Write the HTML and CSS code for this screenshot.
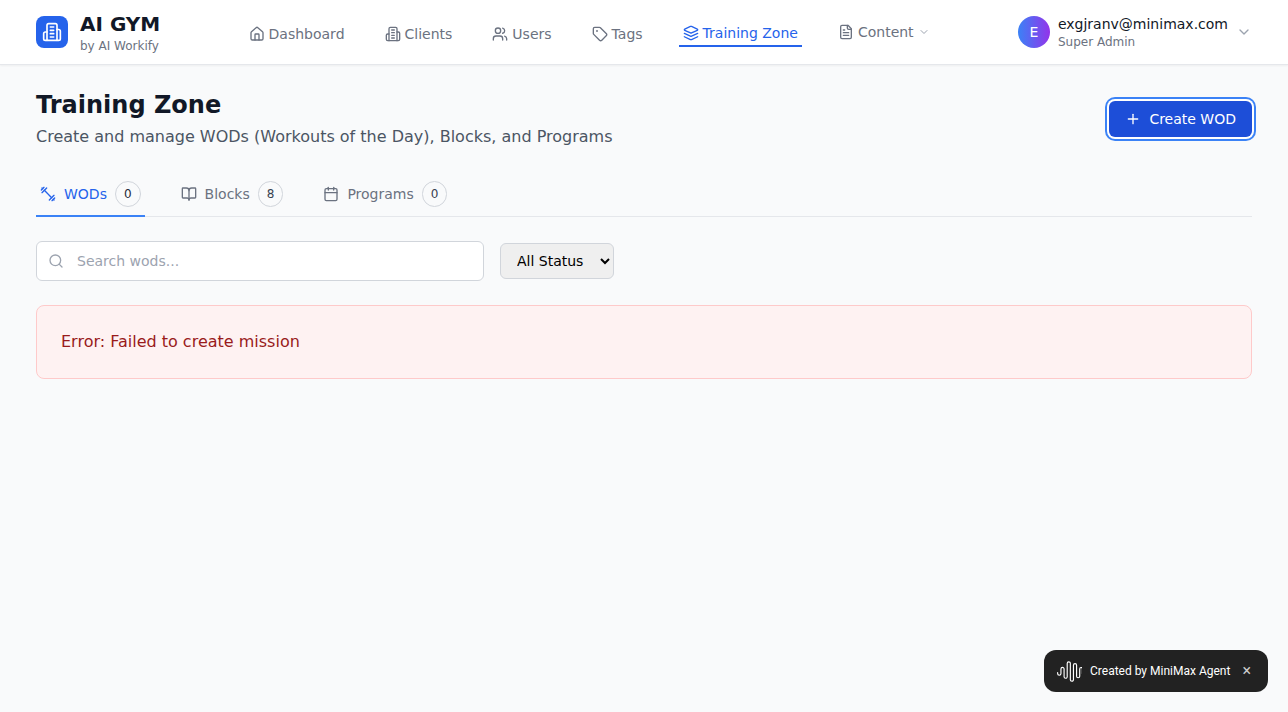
FILE: index.html
```html
<!DOCTYPE html>
<html lang="en">
<head>
<meta charset="utf-8">
<title>AI GYM - Training Zone</title>
<link rel="stylesheet" href="styles.css">
</head>
<body>
<header class="topbar">
  <div class="topbar-inner">
    <div class="brand">
      <div class="brand-logo">
        <svg class="icon icon-20" viewBox="0 0 24 24"><path d="M6 22V4a2 2 0 0 1 2-2h8a2 2 0 0 1 2 2v18Z"/><path d="M6 12H4a2 2 0 0 0-2 2v6a2 2 0 0 0 2 2h2"/><path d="M18 9h2a2 2 0 0 1 2 2v9a2 2 0 0 1-2 2h-2"/><path d="M10 6h4"/><path d="M10 10h4"/><path d="M10 14h4"/><path d="M10 18h4"/></svg>
      </div>
      <div>
        <div class="brand-name">AI GYM</div>
        <div class="brand-by">by AI Workify</div>
      </div>
    </div>
    <nav class="nav">
      <a class="nav-link"><svg class="icon" viewBox="0 0 24 24"><path d="M15 21v-8a1 1 0 0 0-1-1h-4a1 1 0 0 0-1 1v8"/><path d="M3 10a2 2 0 0 1 .709-1.528l7-5.999a2 2 0 0 1 2.582 0l7 5.999A2 2 0 0 1 21 10v9a2 2 0 0 1-2 2H5a2 2 0 0 1-2-2z"/></svg>Dashboard</a>
      <a class="nav-link"><svg class="icon" viewBox="0 0 24 24"><path d="M6 22V4a2 2 0 0 1 2-2h8a2 2 0 0 1 2 2v18Z"/><path d="M6 12H4a2 2 0 0 0-2 2v6a2 2 0 0 0 2 2h2"/><path d="M18 9h2a2 2 0 0 1 2 2v9a2 2 0 0 1-2 2h-2"/><path d="M10 6h4"/><path d="M10 10h4"/><path d="M10 14h4"/><path d="M10 18h4"/></svg>Clients</a>
      <a class="nav-link"><svg class="icon" viewBox="0 0 24 24"><path d="M16 21v-2a4 4 0 0 0-4-4H6a4 4 0 0 0-4 4v2"/><circle cx="9" cy="7" r="4"/><path d="M22 21v-2a4 4 0 0 0-3-3.87"/><path d="M16 3.13a4 4 0 0 1 0 7.75"/></svg>Users</a>
      <a class="nav-link"><svg class="icon" viewBox="0 0 24 24"><path d="M12.586 2.586A2 2 0 0 0 11.172 2H4a2 2 0 0 0-2 2v7.172a2 2 0 0 0 .586 1.414l8.704 8.704a2.426 2.426 0 0 0 3.42 0l6.58-6.58a2.426 2.426 0 0 0 0-3.42z"/><circle cx="7.5" cy="7.5" r=".5" fill="currentColor"/></svg>Tags</a>
      <a class="nav-link nav-active"><svg class="icon" viewBox="0 0 24 24"><path d="m12.83 2.18a2 2 0 0 0-1.66 0L2.6 6.08a1 1 0 0 0 0 1.83l8.58 3.91a2 2 0 0 0 1.66 0l8.58-3.9a1 1 0 0 0 0-1.83Z"/><path d="m22 17.65-9.17 4.16a2 2 0 0 1-1.66 0L2 17.65"/><path d="m22 12.65-9.17 4.16a2 2 0 0 1-1.66 0L2 12.65"/></svg>Training Zone</a>
      <a class="nav-link nav-menu"><svg class="icon" viewBox="0 0 24 24"><path d="M15 2H6a2 2 0 0 0-2 2v16a2 2 0 0 0 2 2h12a2 2 0 0 0 2-2V7Z"/><path d="M14 2v4a2 2 0 0 0 2 2h4"/><path d="M10 9H8"/><path d="M16 13H8"/><path d="M16 17H8"/></svg>Content<svg class="icon icon-12 muted" viewBox="0 0 24 24"><path d="m6 9 6 6 6-6"/></svg></a>
    </nav>
    <div class="user">
      <div class="avatar">E</div>
      <div>
        <div class="user-mail">exgjranv@minimax.com</div>
        <div class="user-role">Super Admin</div>
      </div>
      <svg class="icon muted" viewBox="0 0 24 24"><path d="m6 9 6 6 6-6"/></svg>
    </div>
  </div>
</header>
<main class="page">
  <div class="page-head">
    <div>
      <h1 class="title">Training Zone</h1>
      <p class="subtitle">Create and manage WODs (Workouts of the Day), Blocks, and Programs</p>
    </div>
    <button class="create"><svg class="icon" viewBox="0 0 24 24"><path d="M5 12h14"/><path d="M12 5v14"/></svg>Create WOD</button>
  </div>
  <div class="tabs">
    <div class="tab tab-active"><svg class="icon" viewBox="0 0 24 24"><path d="m6.500 6.500 11 11"/><path d="m21 21-1-1"/><path d="m3 3 1 1"/><path d="m18 22 4-4"/><path d="m2 6 4-4"/><path d="m3 10 7-7"/><path d="m14 21 7-7"/></svg>WODs<span class="badge">0</span></div>
    <div class="tab"><svg class="icon" viewBox="0 0 24 24"><path d="M12 7v14"/><path d="M3 18a1 1 0 0 1-1-1V4a1 1 0 0 1 1-1h5a4 4 0 0 1 4 4 4 4 0 0 1 4-4h5a1 1 0 0 1 1 1v13a1 1 0 0 1-1 1h-6a3 3 0 0 0-3 3 3 3 0 0 0-3-3z"/></svg>Blocks<span class="badge">8</span></div>
    <div class="tab"><svg class="icon" viewBox="0 0 24 24"><path d="M8 2v4"/><path d="M16 2v4"/><rect width="18" height="18" x="3" y="4" rx="2"/><path d="M3 10h18"/></svg>Programs<span class="badge">0</span></div>
  </div>
  <div class="filters">
    <label class="search"><svg class="icon muted" viewBox="0 0 24 24"><circle cx="11" cy="11" r="8"/><path d="m21 21-4.3-4.3"/></svg><input class="search-input" type="text" placeholder="Search wods..."></label>
    <select class="status"><option>All Status</option></select>
  </div>
  <div class="error">Error: Failed to create mission</div>
</main>
<aside class="agent">
  <svg class="wave" viewBox="0 0 24 20"><path d="M.6 11v1a1.6 1.6 0 0 0 3.2 0V7.500a1.500 1.500 0 0 1 3 0V15a1.500 1.500 0 0 0 3 0V2.200a1.500 1.500 0 0 1 3 0V17.800a1.500 1.500 0 0 0 3 0V4a1.500 1.500 0 0 1 3 0V14.500a1.500 1.500 0 0 0 3 0V7.500a1.300 1.300 0 0 1 2.600 0V12"/></svg>
  <span>Created by MiniMax Agent</span>
  <span class="agent-close">×</span>
</aside>
</body>
</html>
```
FILE: styles.css
```css
* { box-sizing: border-box; margin: 0; }
body {
  min-height: 100vh;
  background: #f9fafb;
  color: #111827;
  font: 16px/24px "DejaVu Sans", sans-serif;
}
.icon {
  width: 16px; height: 16px; flex: none;
  fill: none; stroke: currentColor; stroke-width: 2;
  stroke-linecap: round; stroke-linejoin: round;
}
.icon-20 { width: 20px; height: 20px; }
.icon-12 { width: 12px; height: 12px; }
.muted { color: #9ca3af; }

.topbar {
  background: #fff;
  border-bottom: 1px solid #e5e7eb;
  box-shadow: 0 1px 2px rgba(0, 0, 0, .05);
}
.topbar-inner {
  display: flex; align-items: center; justify-content: space-between;
  height: 64px; padding: 0 36px;
}
.brand { display: flex; align-items: center; gap: 12px; }
.brand-logo {
  display: flex; align-items: center; justify-content: center;
  width: 32px; height: 32px; border-radius: 8px;
  background: #2563eb; color: #fff;
}
.brand-name { font-size: 20px; line-height: 28px; font-weight: 700; }
.brand-by { font-size: 12px; line-height: 16px; color: #6b7280; }
.nav { display: flex; align-items: center; gap: 32px; }
.nav-link {
  display: flex; align-items: center; gap: 4px;
  padding: 4px 4px 0;
  font-size: 14px; line-height: 20px; font-weight: 500; color: #6b7280;
}
.nav-active { padding: 6px 4px 2px; color: #2563eb; border-bottom: 2px solid #2563eb; }
.nav-menu { padding-top: 0; }
.user { display: flex; align-items: center; gap: 8px; }
.avatar {
  display: flex; align-items: center; justify-content: center;
  width: 32px; height: 32px; border-radius: 50%;
  background: linear-gradient(to right, #3b82f6, #9333ea);
  color: #fff; font-size: 14px;
}
.user-mail { font-size: 14px; line-height: 20px; }
.user-role { font-size: 12px; line-height: 16px; color: #6b7280; }

.page { display: grid; gap: 24px; padding: 24px 36px; }
.page-head { display: flex; align-items: center; justify-content: space-between; }
.title { font-size: 24px; line-height: 32px; font-weight: 700; }
.subtitle { margin-top: 4px; color: #4b5563; }
.create {
  display: flex; align-items: center; gap: 8px;
  height: 36px; padding: 0 16px; border: 0; border-radius: 6px;
  background: #1d4ed8; color: #fff;
  font: 500 14px/20px "DejaVu Sans", sans-serif;
  box-shadow: 0 0 0 2px #fff, 0 0 0 4px #3b82f6;
}
.tabs { display: flex; gap: 32px; height: 44px; border-bottom: 1px solid #e5e7eb; }
.tab {
  display: flex; align-items: center; gap: 8px;
  height: 44px; padding: 8px 4px; border-bottom: 2px solid transparent;
  font-size: 14px; line-height: 20px; font-weight: 500; color: #6b7280;
}
.tab-active { color: #2563eb; border-color: #3b82f6; }
.badge {
  padding: 4px 8px; border: 1px solid #d1d5db; border-radius: 13px;
  font-size: 12px; line-height: 16px; color: #374151;
}
.tab-active .badge { color: #1f2937; }
.filters { display: flex; align-items: center; gap: 16px; }
.search {
  display: flex; align-items: center; gap: 13px;
  width: 448px; height: 40px; padding: 0 11px;
  border: 1px solid #d1d5db; border-radius: 6px; background: #fff;
}
.search-input {
  flex: 1; min-width: 0; padding: 0; border: 0; outline: 0; background: none;
  font: 14px/20px "DejaVu Sans", sans-serif;
}
.search-input::placeholder { color: #9ca3af; }
.status {
  width: 114px; height: 36px; padding: 0 0 0 12px;
  border: 1px solid #d1d5db; border-radius: 6px;
  background: #efefef; color: #000;
  font: 14px/20px "DejaVu Sans", sans-serif;
}
.error {
  padding: 24px; border: 1px solid #fecaca; border-radius: 8px;
  background: #fef2f2; color: #991b1b;
}
.agent {
  position: fixed; right: 20px; bottom: 20px;
  display: flex; align-items: center; gap: 8px;
  width: 224px; height: 42px; padding: 0 13px; border-radius: 12px;
  background: #222; color: #fff;
  font: 400 12px/18px Roboto, sans-serif;
}
.wave {
  width: 25px; height: 21px; fill: none; stroke: #fff;
  stroke-width: 1.1; stroke-linecap: round;
}
.agent-close { margin-left: 4px; font-size: 16px; color: #ccc; }
```
